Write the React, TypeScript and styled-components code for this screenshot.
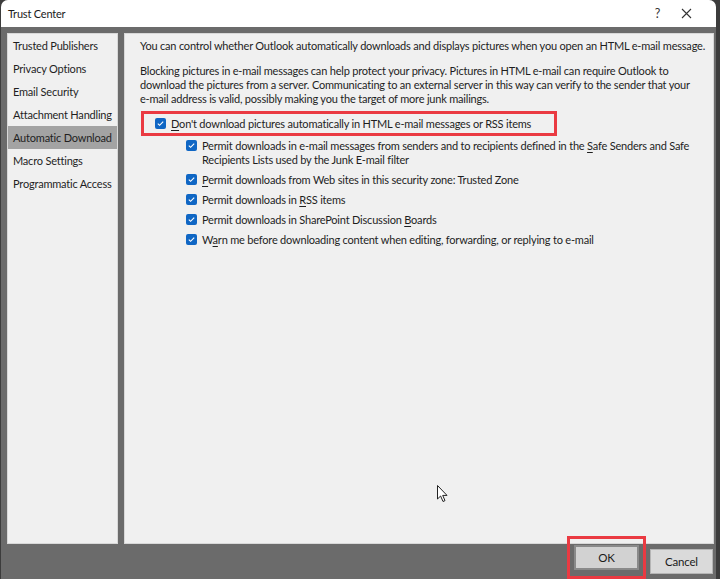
import { FC, ReactNode } from 'react';
import styled, { createGlobalStyle } from 'styled-components';

const GlobalStyle = createGlobalStyle`
  html, body {
    margin: 0;
    padding: 0;
    background: #3c3c3c;
    font-family: Lato, 'Noto Sans', sans-serif;
    font-size: 11px;
    letter-spacing: -0.2px;
    color: #1e1e1e;
  }
`;

const Window = styled.div`
  position: relative;
  width: 715px;
  height: 579px;
  margin-left: 1px;
  display: flex;
  flex-direction: column;
  border-radius: 7px 7px 0 0;
  overflow: hidden;
  background: #6b6b6b;
`;

const TitleBar = styled.div`
  height: 27px;
  flex: none;
  background: #ffffff;
  display: flex;
  align-items: center;
  padding: 0 15px 0 7px;
  font-size: 11px;
  color: #1a1a1a;
`;

const Title = styled.div`
  flex: 1;
`;

const TitleButton = styled.div`
  width: 29px;
  height: 27px;
  display: flex;
  align-items: center;
  justify-content: center;
  color: #333;
  font-size: 12.5px;
`;

const Body = styled.div`
  flex: 1;
  display: flex;
  flex-direction: column;
  padding: 6px 3px 0 6px;
`;

const Main = styled.div`
  height: 511px;
  display: flex;
  gap: 6px;
`;

const Nav = styled.div`
  width: 111px;
  flex: none;
  background: #f0f0f0;
  border: 1px solid #d8d8d8;
  box-sizing: border-box;
`;

const NavItem = styled.div<{ $active?: boolean }>`
  height: 23px;
  display: flex;
  align-items: center;
  padding-left: 5px;
  white-space: nowrap;
  background: ${(p) => (p.$active ? '#a3a3a3' : 'transparent')};
  color: #1f1f1f;
`;

const Content = styled.div`
  flex: 1;
  background: #f0f0f0;
  border: 1px solid #d8d8d8;
  box-sizing: border-box;
  padding: 5px 8px 0 15px;
  line-height: 14px;
  white-space: nowrap;
`;

const Para = styled.p`
  margin: 0 0 11px 0;
`;

const Highlight = styled.div`
  margin: -6px 0 3px 1px;
  width: 416px;
  height: 25px;
  box-sizing: border-box;
  border: 3px solid #ea3a42;
  display: flex;
  align-items: center;
  padding-left: 11px;
`;

const Row = styled.div<{ $indent?: boolean }>`
  display: flex;
  align-items: flex-start;
  gap: 5px;
  padding-left: ${(p) => (p.$indent ? '46px' : '0')};
  margin-bottom: 6px;
`;

const Box = styled.span`
  width: 11px;
  height: 11px;
  flex: none;
  margin-top: 1px;
  border-radius: 2px;
  background: #0f66c4;
  display: flex;
  align-items: center;
  justify-content: center;
`;

const Key = styled.span`
  text-decoration: underline;
  text-underline-offset: 2px;
`;

const Footer = styled.div`
  flex: 1;
  display: flex;
  justify-content: flex-end;
  align-items: center;
  gap: 4px;
  padding-right: 0;
`;

const FocusRing = styled.div`
  border: 3px solid #ea3a42;
  padding: 6px 4px;
  margin-top: -8px;
`;

const Button = styled.div<{ $focus?: boolean }>`
  width: ${(p) => (p.$focus ? '65px' : '63px')};
  height: 25px;
  box-sizing: border-box;
  display: flex;
  align-items: center;
  justify-content: center;
  background: ${(p) => (p.$focus ? '#d2d2d2' : '#dadada')};
  border: ${(p) => (p.$focus ? '2px solid #8a8a8a' : '1px solid #b5b5b5')};
  color: #1a1a1a;
  font-size: 11.5px;
`;

const Cursor = styled.svg`
  position: absolute;
  left: 436px;
  top: 485px;
`;

const Check: FC = () => (
  <Box>
    <svg width="9" height="9" viewBox="0 0 9 9">
      <path d="M1.8 4.6 L3.6 6.3 L7.2 2.6" fill="none" stroke="#fff" strokeWidth="1.1" />
    </svg>
  </Box>
);

const Option: FC<{ children: ReactNode }> = ({ children }) => (
  <Row $indent>
    <Check />
    <span>{children}</span>
  </Row>
);

const navItems = [
  'Trusted Publishers',
  'Privacy Options',
  'Email Security',
  'Attachment Handling',
  'Automatic Download',
  'Macro Settings',
  'Programmatic Access',
];

const App: FC = () => {
  return (
    <>
      <GlobalStyle />
      <Window>
        <TitleBar>
          <Title>Trust Center</Title>
          <TitleButton>?</TitleButton>
          <TitleButton>
            <svg width="11" height="11" viewBox="0 0 11 11">
              <path d="M1 1 L10 10 M10 1 L1 10" stroke="#333" strokeWidth="1.1" />
            </svg>
          </TitleButton>
        </TitleBar>
        <Body>
          <Main>
            <Nav>
              {navItems.map((item) => (
                <NavItem key={item} $active={item === 'Automatic Download'}>
                  {item}
                </NavItem>
              ))}
            </Nav>
            <Content>
              <Para>
                You can control whether Outlook automatically downloads and displays pictures when you open an HTML e-mail message.
              </Para>
              <Para>
                Blocking pictures in e-mail messages can help protect your privacy. Pictures in HTML e-mail can require Outlook to
                <br />
                download the pictures from a server. Communicating to an external server in this way can verify to the sender that your
                <br />
                e-mail address is valid, possibly making you the target of more junk mailings.
              </Para>
              <Highlight>
                <Row style={{ marginBottom: 0 }}>
                  <Check />
                  <span>
                    <Key>D</Key>on't download pictures automatically in HTML e-mail messages or RSS items
                  </span>
                </Row>
              </Highlight>
              <Option>
                Permit downloads in e-mail messages from senders and to recipients defined in the <Key>S</Key>afe Senders and Safe
                <br />
                Recipients Lists used by the Junk E-mail filter
              </Option>
              <Option>
                <Key>P</Key>ermit downloads from Web sites in this security zone: Trusted Zone
              </Option>
              <Option>
                Permit downloads in <Key>R</Key>SS items
              </Option>
              <Option>
                Permit downloads in SharePoint Discussion <Key>B</Key>oards
              </Option>
              <Option>
                W<Key>a</Key>rn me before downloading content when editing, forwarding, or replying to e-mail
              </Option>
            </Content>
          </Main>
          <Footer>
            <FocusRing>
              <Button $focus>OK</Button>
            </FocusRing>
            <Button>Cancel</Button>
          </Footer>
        </Body>
        <Cursor width="12" height="18" viewBox="0 0 12 18">
          <path d="M0.5 0.5 L0.5 14 L3.6 11 L6 16.5 L8 15.6 L5.7 10.4 L10 10.4 Z" fill="#fff" stroke="#222" strokeWidth="1" />
        </Cursor>
      </Window>
    </>
  );
};

export default App;
